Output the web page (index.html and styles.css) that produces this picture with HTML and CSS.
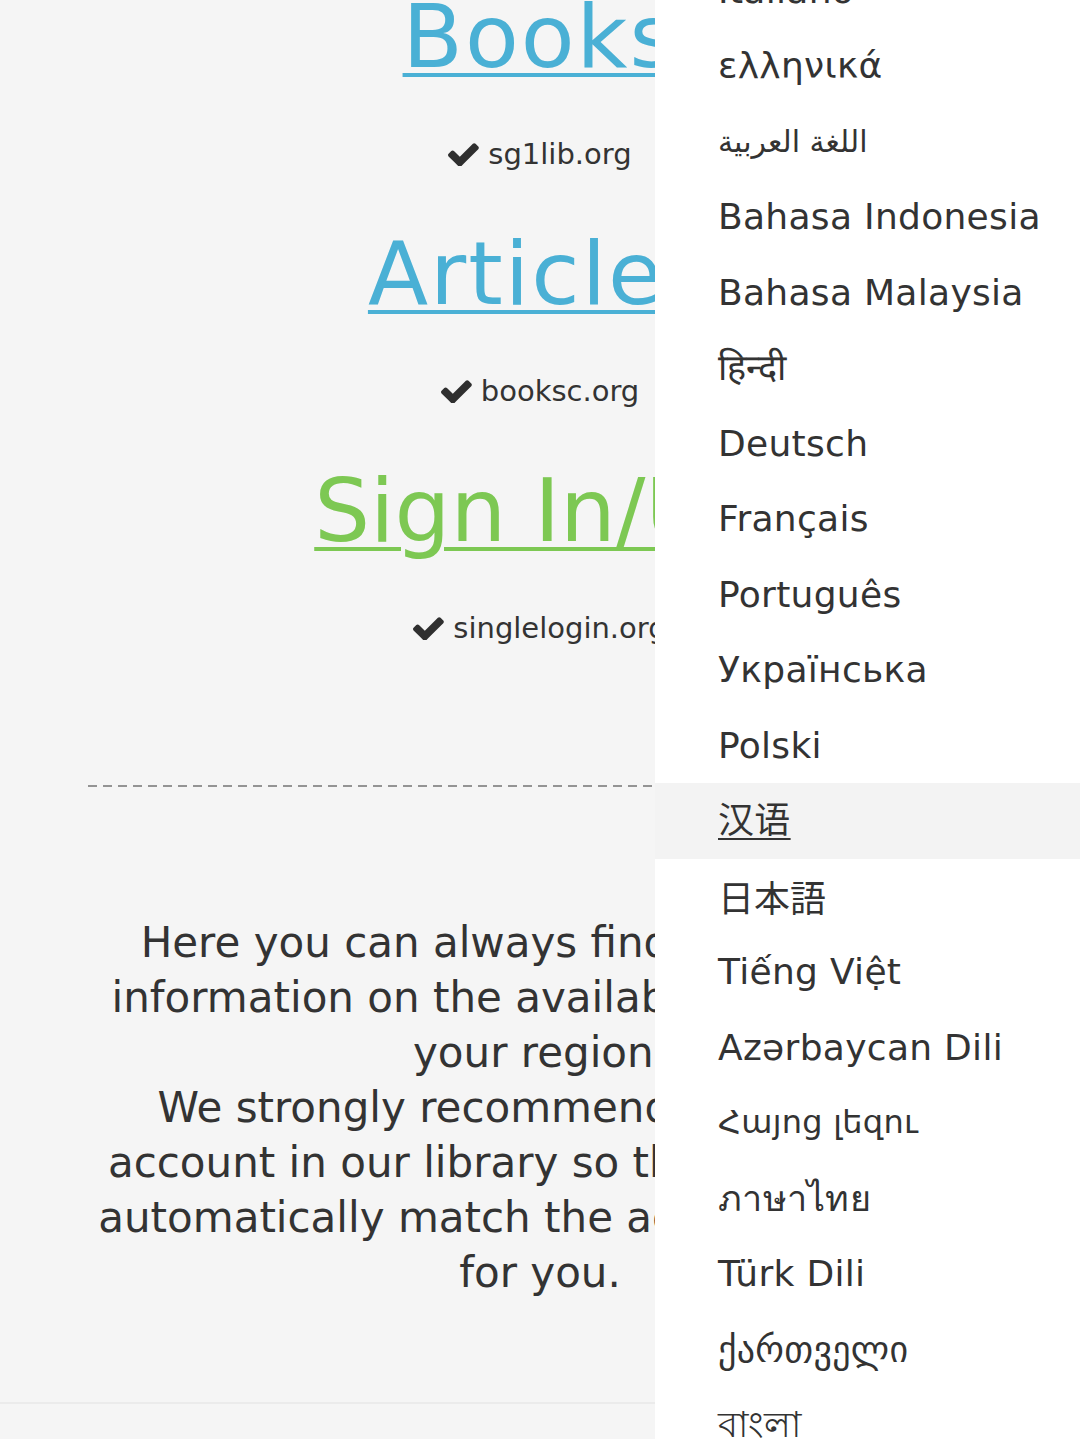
FILE: index.html
```html
<!DOCTYPE HTML>
<html>
<head>
<title>Z-Library mirrors</title>
<link rel="stylesheet" href="styles.css">
</head>
<body>
<div class="page">
    <main class="mirrors">
        <section class="mirror">
            <a class="mirror-link" href="#">Books</a>
            <div class="mirror-domain"><svg class="check" viewBox="120 330 1560 1140"><path d="M1671 566q0 40-28 68l-724 724-136 136q-28 28-68 28t-68-28l-136-136-362-362q-28-28-28-68t28-68l136-136q28-28 68-28t68 28l294 295 656-657q28-28 68-28t68 28l136 136q28 28 28 68z"/></svg>sg1lib.org</div>
        </section>
        <section class="mirror">
            <a class="mirror-link" href="#">Articles</a>
            <div class="mirror-domain"><svg class="check" viewBox="120 330 1560 1140"><path d="M1671 566q0 40-28 68l-724 724-136 136q-28 28-68 28t-68-28l-136-136-362-362q-28-28-28-68t28-68l136-136q28-28 68-28t68 28l294 295 656-657q28-28 68-28t68 28l136 136q28 28 28 68z"/></svg>booksc.org</div>
        </section>
        <section class="mirror">
            <a class="mirror-link login" href="#">Sign In/Up</a>
            <div class="mirror-domain"><svg class="check" viewBox="120 330 1560 1140"><path d="M1671 566q0 40-28 68l-724 724-136 136q-28 28-68 28t-68-28l-136-136-362-362q-28-28-28-68t28-68l136-136q28-28 68-28t68 28l294 295 656-657q28-28 68-28t68 28l136 136q28 28 28 68z"/></svg>singlelogin.org</div>
        </section>
    </main>

    <div class="divider"></div>

    <p class="notice">
        Here you can always find the relevant<br>
        information on the available domains for<br>
        your region.<br>
        We strongly recommend creating an<br>
        account in our library so that the site will<br>
        automatically match the actual addresses<br>
        for you.
    </p>

    <footer class="footer"></footer>
</div>

<nav class="lang-menu">
    <ul>
        <li><a href="#" lang="it">Italiano</a></li>
        <li><a href="#" lang="el">ελληνικά</a></li>
        <li><a href="#" lang="ar">اللغة العربية</a></li>
        <li><a href="#" lang="id">Bahasa Indonesia</a></li>
        <li><a href="#" lang="ms">Bahasa Malaysia</a></li>
        <li><a href="#" lang="hi">हिन्दी</a></li>
        <li><a href="#" lang="de">Deutsch</a></li>
        <li><a href="#" lang="fr">Français</a></li>
        <li><a href="#" lang="pt">Português</a></li>
        <li><a href="#" lang="uk">Українська</a></li>
        <li><a href="#" lang="pl">Polski</a></li>
        <li class="selected"><a href="#" lang="zh-CN">汉语</a></li>
        <li><a href="#" lang="ja">日本語</a></li>
        <li><a href="#" lang="vi">Tiếng Việt</a></li>
        <li><a href="#" lang="az">Azərbaycan Dili</a></li>
        <li><a href="#" lang="hy">Հայոց լեզու</a></li>
        <li><a href="#" lang="th">ภาษาไทย</a></li>
        <li><a href="#" lang="tr">Türk Dili</a></li>
        <li><a href="#" lang="ka">ქართველი</a></li>
        <li><a href="#" lang="bn">বাংলা</a></li>
    </ul>
</nav>
</body>
</html>
```

FILE: styles.css
```css
body {
    margin: 0;
    height: 1439px;
    overflow: hidden;
    background: #f5f5f5;
    color: #333;
    font-family: "DejaVu Sans", "Noto Sans CJK SC", sans-serif;
}

.page {
    position: relative;
}

.mirrors {
    display: flex;
    flex-direction: column;
    align-items: center;
    gap: 76px;
    padding-top: 7px;
}

.mirror {
    display: flex;
    flex-direction: column;
    align-items: center;
}

.mirror-link {
    font-size: 88px;
    line-height: 60px;
    letter-spacing: 2px;
    color: #4ab0d5;
    text-decoration: underline;
    text-decoration-thickness: 4px;
    text-underline-offset: 6px;
}

.mirror-link.login {
    letter-spacing: 0;
    color: #7dc853;
}

.mirror-domain {
    display: flex;
    align-items: center;
    gap: 9px;
    margin-top: 73px;
    font-size: 29px;
    line-height: 28px;
    color: #333;
}

.check {
    width: 31px;
    height: 23px;
    fill: #2f2f2f;
}

.divider {
    height: 2px;
    margin: 143px 88px 0;
    background: repeating-linear-gradient(to right, #949494 0 9px, transparent 9px 15px);
}

.notice {
    margin: 128px 0 0;
    font-size: 42px;
    line-height: 55px;
    text-align: center;
}

.footer {
    margin-top: 102px;
    height: 40px;
    border-top: 2px solid #ebebeb;
}

.lang-menu {
    position: absolute;
    top: 0;
    right: 0;
    width: 425px;
    height: 1439px;
    overflow: hidden;
    background: #fff;
}

.lang-menu ul {
    list-style: none;
    margin: -47.5px 0 0;
    padding: 0;
}

.lang-menu a {
    display: block;
    padding-left: 63px;
    font-size: 36px;
    line-height: 75.5px;
    letter-spacing: 0.3px;
    color: #333;
    text-decoration: none;
    white-space: nowrap;
}

.lang-menu .selected {
    background: #f3f3f3;
}

.lang-menu .selected a {
    text-decoration: underline;
    text-decoration-thickness: 2px;
    text-underline-offset: 5px;
}

.lang-menu a:lang(ar) {
    font-size: 30px;
}

.lang-menu a:lang(hy) {
    font-size: 32px;
}

.lang-menu a:lang(ja) {
    font-family: "Noto Sans CJK JP", sans-serif;
    letter-spacing: 0;
}
```
